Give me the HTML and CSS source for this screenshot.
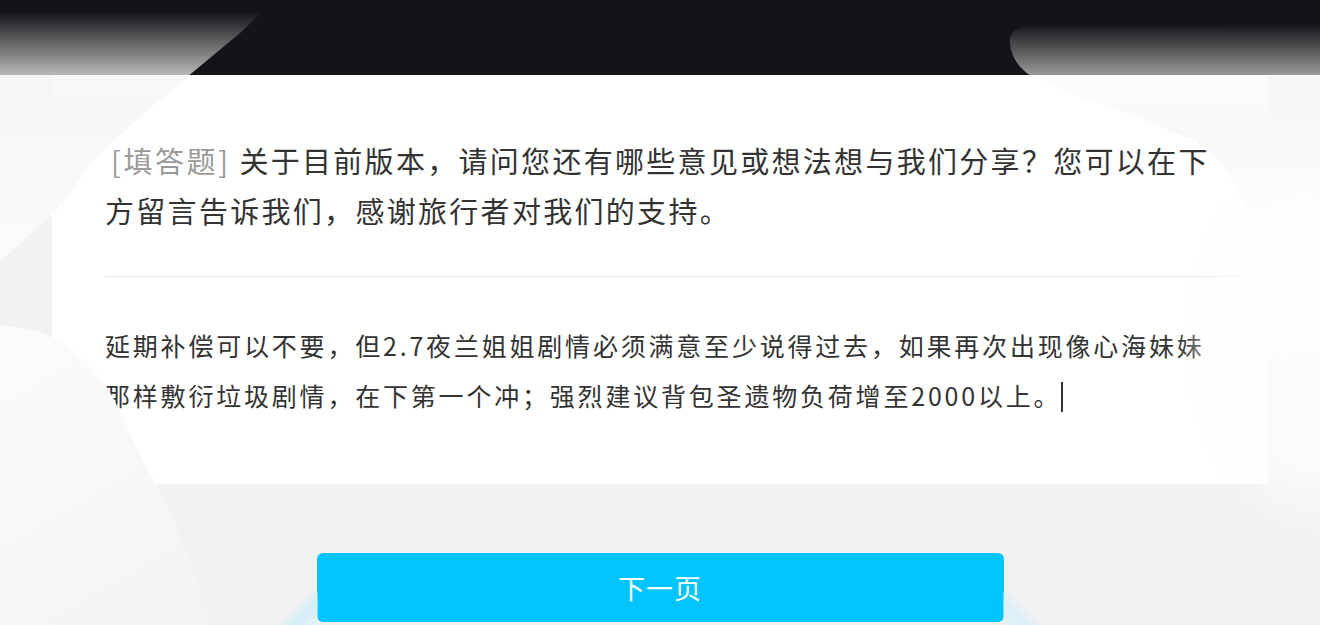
FILE: index.html
```html
<!DOCTYPE html>
<html lang="zh-CN">
<head>
<meta charset="utf-8">
<title>问卷</title>
<link rel="stylesheet" href="styles.css">
</head>
<body>
<header class="topbar"></header>
<main class="sheet">
  <section class="card">
    <p class="question"><span class="tag">[填答题]</span> 关于目前版本，请问您还有哪些意见或想法想与我们分享？您可以在下方留言告诉我们，感谢旅行者对我们的支持。</p>
    <hr class="divider">
    <p class="answer">延期补偿可以不要，但2.7夜兰姐姐剧情必须满意至少说得过去，如果再次出现像心海妹妹那样敷衍垃圾剧情，在下第一个冲；强烈建议背包圣遗物负荷增至2000以上。<span class="caret"></span></p>
  </section>
  <div class="actions">
    <button class="next" type="button">下一页</button>
  </div>
</main>
<div class="glare glare-tl"></div>
<div class="glare glare-tr"></div>
<div class="glare glare-r"></div>
<div class="glare glare-bl"></div>
<div class="glare glare-btn-l"></div>
<div class="glare glare-btn-r"></div>
</body>
</html>
```

FILE: styles.css
```css
* {
  box-sizing: border-box;
}

html, body {
  margin: 0;
  height: 100%;
}

body {
  background: #f2f2f2;
  font-family: "Noto Sans CJK SC", "Noto Sans", sans-serif;
  color: #333;
  overflow: hidden;
  position: relative;
}

.topbar {
  height: 75px;
  background: #131417;
}

.sheet {
  display: flex;
  flex-direction: column;
}

.card {
  margin: 0 52px;
  background: #fff;
  padding: 60px 18px 64px 53px;
}

.question {
  margin: 0 25px 0 0;
  font-size: 29px;
  line-height: 50px;
  letter-spacing: 2.3px;
  color: #333;
}

.tag {
  color: #9a9a9a;
  margin-left: 6px;
  letter-spacing: 2.6px;
}

.divider {
  border: 0;
  height: 1px;
  background: #e8e8e8;
  margin: 41px 0 43px;
}

.answer {
  margin: 0 25px 0 0;
  font-size: 25px;
  line-height: 50px;
  letter-spacing: 2.8px;
  color: #333;
}

.caret {
  display: inline-block;
  width: 2px;
  height: 30px;
  background: #333;
  vertical-align: -6px;
  margin-left: 0;
}

.actions {
  display: flex;
  justify-content: center;
  padding-top: 69px;
}

.next {
  width: 687px;
  height: 69px;
  border: 0;
  border-radius: 6px;
  background: #00c4fe;
  color: #fff;
  font-family: inherit;
  font-size: 27px;
  letter-spacing: 1px;
}

/* soft light bleeding over the edges of the view */
.glare {
  position: absolute;
  pointer-events: none;
}

.glare-tl {
  left: 0;
  top: 12px;
  width: 262px;
  height: 250px;
  background: linear-gradient(to bottom, rgba(246,246,246,0) 0%, rgba(246,246,246,0.75) 26%, #f7f7f7 40%, #fbfbfb 100%);
  clip-path: path("M 0 0 L 262 0 L 240 21 L 187 65 L 140 105 L 96 145 L 60 195 L 0 250 Z");
}

.glare-tr {
  left: 1008px;
  top: 24px;
  width: 312px;
  height: 330px;
  background: linear-gradient(to bottom, rgba(250,250,250,0) 0%, rgba(250,250,250,0.6) 16%, #f8f8f8 32%, #fdfdfd 60%);
  clip-path: path("M 2 20 Q 0 3 22 2 L 312 0 L 312 330 L 244 330 L 242 246 Q 238 178 229 163 Q 212 133 185 116 Q 145 99 92 79 Q 45 63 20 50 Q 4 38 2 20 Z");
}

.glare-r {
  left: 1180px;
  top: 180px;
  width: 180px;
  height: 360px;
  background: radial-gradient(ellipse at 75% 45%, rgba(253,253,253,0.95) 0%, rgba(253,253,253,0.75) 45%, rgba(253,253,253,0) 72%);
  filter: blur(4px);
}

.glare-bl {
  left: 0;
  top: 326px;
  width: 210px;
  height: 300px;
  background: linear-gradient(150deg, #fbfbfb 0%, #f9f9f9 40%, #f3f3f3 100%);
  clip-path: path("M 0 0 Q 40 0 70 22 Q 105 50 118 82 Q 140 130 165 175 Q 190 230 210 300 L 0 300 Z");
}

.glare-btn-l {
  left: 268px;
  top: 592px;
  width: 50px;
  height: 36px;
  background: linear-gradient(135deg, rgba(200,236,250,0) 45%, rgba(200,236,250,0.75) 70%, rgba(225,244,252,0.3) 100%);
}

.glare-btn-r {
  left: 1003px;
  top: 592px;
  width: 50px;
  height: 36px;
  background: linear-gradient(225deg, rgba(200,236,250,0) 45%, rgba(205,238,250,0.7) 70%, rgba(225,244,252,0.3) 100%);
}
```
